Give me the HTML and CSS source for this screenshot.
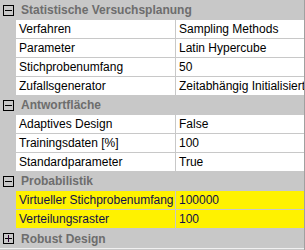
FILE: index.html
```html
<!DOCTYPE html>
<html>
<head>
<meta charset="utf-8">
<link rel="stylesheet" href="styles.css">
</head>
<body>
<div class="grid">
  <div class="cat"><span class="tog minus"></span><span class="title">Statistische Versuchsplanung</span></div>
  <div class="prop"><span class="name">Verfahren</span><span class="val">Sampling Methods</span></div>
  <div class="prop"><span class="name">Parameter</span><span class="val">Latin Hypercube</span></div>
  <div class="prop"><span class="name">Stichprobenumfang</span><span class="val">50</span></div>
  <div class="prop"><span class="name">Zufallsgenerator</span><span class="val">Zeitabhängig Initialisiert</span></div>
  <div class="cat"><span class="tog minus"></span><span class="title">Antwortfläche</span></div>
  <div class="prop"><span class="name">Adaptives Design</span><span class="val">False</span></div>
  <div class="prop"><span class="name">Trainingsdaten [%]</span><span class="val">100</span></div>
  <div class="prop"><span class="name">Standardparameter</span><span class="val">True</span></div>
  <div class="cat"><span class="tog minus"></span><span class="title">Probabilistik</span></div>
  <div class="prop hl"><span class="name">Virtueller Stichprobenumfang</span><span class="val">100000</span></div>
  <div class="prop hl"><span class="name">Verteilungsraster</span><span class="val">100</span></div>
  <div class="cat last"><span class="tog plus"></span><span class="title">Robust Design</span></div>
</div>
</body>
</html>
```
FILE: styles.css
```css
html, body {
  margin: 0;
  padding: 0;
  background: #c8c8c8;
}
.grid {
  width: 305px;
  height: 250px;
  box-sizing: border-box;
  border-right: 1px solid #a0a0a0;
  background: #c8c8c8;
  padding-top: 1px;
  display: flex;
  flex-direction: column;
  gap: 1px;
  font-family: "Liberation Sans", Arial, sans-serif;
  font-size: 12px;
  overflow: hidden;
}
.cat, .prop {
  height: 18px;
  display: flex;
  align-items: center;
  flex: none;
}
.cat.last {
  height: 19px;
  border-bottom: 1px solid #f0f0f0;
}
.tog {
  width: 9px;
  height: 9px;
  border: 1px solid #000;
  margin-left: 3px;
  position: relative;
  flex: none;
}
.tog::before {
  content: "";
  position: absolute;
  left: 1px;
  top: 4px;
  width: 7px;
  height: 1px;
  background: #000;
}
.tog.plus::after {
  content: "";
  position: absolute;
  left: 4px;
  top: 1px;
  width: 1px;
  height: 7px;
  background: #2a0030;
}
.title {
  margin-left: 7px;
  font-weight: bold;
  color: #6d6d6d;
  white-space: nowrap;
}
.prop {
  padding-left: 16px;
  gap: 1px;
}
.name, .val {
  height: 18px;
  line-height: 18px;
  background: #fff;
  color: #000;
  white-space: nowrap;
  overflow: hidden;
  padding-left: 3px;
  box-sizing: border-box;
}
.name {
  width: 159px;
  flex: none;
}
.val {
  flex: 1;
  min-width: 0;
}
.hl .name, .hl .val {
  background: #fff200;
  color: #10104a;
}
```
